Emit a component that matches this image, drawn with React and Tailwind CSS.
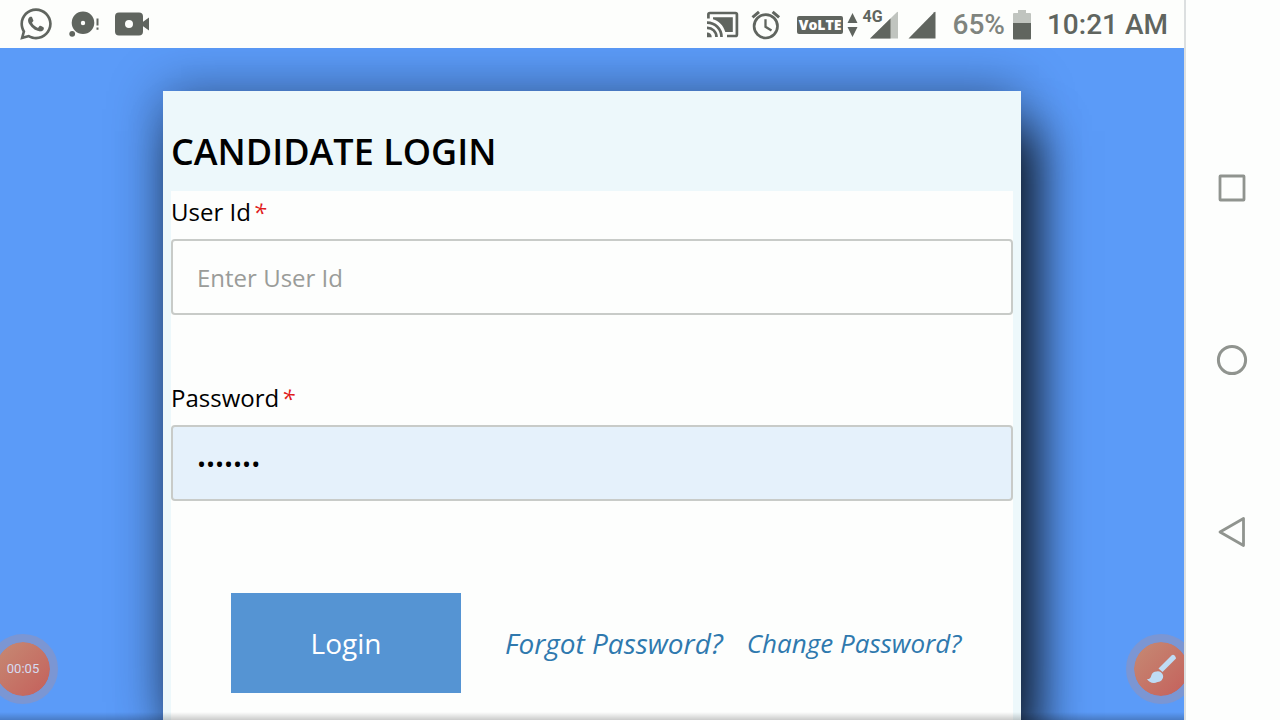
import React from 'react';
import { FaWhatsapp } from 'react-icons/fa';

const StatusBar = () => {
    return (
        <header className="flex h-12 items-center justify-between bg-[#fdfefc] pl-[18px] pr-4 font-['Roboto',sans-serif] text-[#60655f]">
            <div className="flex items-center gap-[15px]">
                <FaWhatsapp className="size-9" aria-label="WhatsApp" />
                <svg className="h-7 w-[31px]" viewBox="0 0 31 28" fill="currentColor">
                    <path fillRule="evenodd" d="M14 1.500a11.300 11.300 0 1 1 0 22.600a11.300 11.300 0 1 1 0-22.600zm0 9.300a2.200 2.200 0 1 0 0 4.400a2.200 2.200 0 1 0 0-4.400z" />
                    <circle cx="3.200" cy="23.800" r="2.900" />
                    <path d="M27.500 8.500h2v7h-2zM27.500 17.500h2v2.200h-2z" />
                </svg>
                <svg className="h-6 w-[35px]" viewBox="0 0 35 24" fill="currentColor">
                    <path fillRule="evenodd" d="M4 .5h20a4 4 0 0 1 4 4v15a4 4 0 0 1-4 4H4a4 4 0 0 1-4-4v-15a4 4 0 0 1 4-4zm10 7.500a4 4 0 1 0 0 8a4 4 0 1 0 0-8z" />
                    <path d="M27 10.500l7-5v13l-7-5z" />
                </svg>
            </div>

            <div className="flex items-center pt-[2px]">
                {/* Cast */}
                <svg className="mr-3 h-7 w-8" viewBox="0 0 32 28" fill="none" stroke="currentColor" strokeWidth="2.700">
                    <path d="M1.400 7.500V3.500q0-1.500 1.500-1.500h25.500q1.500 0 1.500 1.500v20q0 1.500-1.500 1.500H20" />
                    <path d="M6 6.300h19.800v14.800H18.300C16 14 12 9.800 6 8.200z" fill="currentColor" stroke="none" />
                    <path d="M0 11.700A14.300 14.300 0 0 1 14.500 26M0 16.800A9.200 9.200 0 0 1 9.500 26" />
                    <path d="M0 21.500A4.500 4.500 0 0 1 4.700 26.200H0z" fill="currentColor" stroke="none" />
                </svg>
                {/* Alarm */}
                <svg className="mr-4 h-[30px] w-[30px]" viewBox="0 0 30 30" fill="none" stroke="currentColor" strokeWidth="2.700">
                    <circle cx="14.800" cy="16.300" r="11.700" />
                    <path d="M14.500 9.300v7.500l6 3.700" strokeWidth="2.300" />
                    <path d="M1.500 7.300L8 1.800M21.600 1.800l6.500 5.500" strokeWidth="3" />
                </svg>
                <span className="mr-1 flex h-[18px] items-center rounded-xs bg-[#60655f] px-[2px] font-['Open_Sans',sans-serif] text-sm font-extrabold text-white">
                    VoLTE
                </span>
                <svg className="mr-1 h-6 w-[11px]" viewBox="0 0 11 24" fill="currentColor">
                    <path d="M5.500 0L10.500 10H.5zM5.500 24L.5 14h10z" />
                </svg>
                <div className="relative mr-2.5 flex w-9 justify-end">
                    <svg className="h-7 w-7" viewBox="0 0 28 28">
                        <path d="M28 1.500Q28 0 26.800 1.200L0 27.500h28z" fill="#c0c4bf" />
                        <path d="M20.500 7.400V27.500H0z" fill="#60655f" />
                    </svg>
                    <span className="absolute -top-0.5 left-0 text-base leading-none font-bold">4G</span>
                </div>
                <svg className="mr-4 h-7 w-7" viewBox="0 0 28 28" fill="currentColor">
                    <path d="M27.500 1.500Q27.500 0 26.300 1.200L.5 27.500h27z" />
                </svg>
                <span className="mr-2 text-[28px] font-medium text-[#7f847e]">65%</span>
                <svg className="mr-4 h-[30px] w-[18px]" viewBox="0 0 18 30">
                    <path d="M5 0h8v3h4a1 1 0 0 1 1 1v9H0V4a1 1 0 0 1 1-1h4z" fill="#c0c4bf" />
                    <path d="M0 13h18v15.500a1 1 0 0 1-1 1H1a1 1 0 0 1-1-1z" fill="#60655f" />
                </svg>
                <span className="text-[28px] font-medium">10:21 AM</span>
            </div>
        </header>
    );
};

const Field = ({ id, label, fieldClass, ...rest }) => {
    return (
        <div>
            <label htmlFor={id} className="flex h-12 gap-0.5 text-2xl leading-[42px]">
                {label}
                <em className="text-[#e01b1b]">*</em>
            </label>
            <input
                id={id}
                className={`h-[76px] w-full rounded border-2 border-[#c8cbc8] px-6 text-2xl outline-none placeholder:text-[#9a9c99] ${fieldClass}`}
                {...rest}
            />
        </div>
    );
};

const LoginCard = () => {
    return (
        <section className="flex flex-1 flex-col bg-[#edf8fb] px-2 shadow-[18px_40px_44px_rgba(0,0,0,0.75),0_0_50px_rgba(0,0,0,0.4)]">
            <h1 className="flex h-[100px] items-center pt-[22px] text-4xl font-semibold">CANDIDATE LOGIN</h1>
            <form className="flex flex-1 flex-col bg-[#fdfefd]" onSubmit={(e) => e.preventDefault()}>
                <div className="flex flex-col gap-[62px]">
                    <Field id="user-id" label="User Id" type="text" placeholder="Enter User Id" fieldClass="bg-[#fdfefd]" />
                    <Field id="password" label="Password" type="password" defaultValue="1234567" fieldClass="bg-[#e5f1fb]" />
                </div>
                <div className="mt-[92px] flex items-center pl-[60px] text-[#2f79ae] italic">
                    <button type="submit" className="h-[100px] w-[230px] bg-[#5594d3] text-[28px] text-white not-italic">
                        Login
                    </button>
                    <a href="#forgot" className="ml-11 text-[28px]">Forgot Password?</a>
                    <a href="#change" className="ml-6 text-[26px]">Change Password?</a>
                </div>
            </form>
        </section>
    );
};

// Floating recorder button
const Bubble = ({ className, children, ...rest }) => {
    return (
        <button
            type="button"
            className={`absolute bottom-4 flex size-[70px] items-center justify-center rounded-full border-8 border-[#7b96d3] bg-linear-to-br from-[#c58a74] to-[#c45f5b] bg-clip-padding ${className}`}
            {...rest}
        >
            {children}
        </button>
    );
};

const NavBar = () => {
    return (
        <nav className="flex w-24 flex-col items-center justify-center gap-[140px] border-l-2 border-[#dcdfe0] bg-[#fdfefd] pr-[2px] text-[#90948f]">
            <button type="button" aria-label="Recent apps">
                <svg className="size-8" viewBox="0 0 32 32" fill="none" stroke="currentColor" strokeWidth="2.800">
                    <rect x="4" y="4" width="24" height="24" rx="0.500" />
                </svg>
            </button>
            <button type="button" aria-label="Home">
                <svg className="size-8" viewBox="0 0 32 32" fill="none" stroke="currentColor" strokeWidth="3">
                    <circle cx="16" cy="16" r="13.600" />
                </svg>
            </button>
            <button type="button" aria-label="Back">
                <svg className="size-8" viewBox="0 0 32 32" fill="none" stroke="currentColor" strokeWidth="2.800" strokeLinejoin="round">
                    <path d="M27.500 2.500v27L4 16z" />
                </svg>
            </button>
        </nav>
    );
};

const App = () => {
    return (
        <div className="flex min-h-screen bg-[#fdfefd]">
            <div className="flex flex-1 flex-col">
                <StatusBar />
                <main className="relative flex flex-1 flex-col overflow-hidden bg-[#5b9bf8] px-[163px] pt-[43px] font-['Open_Sans',sans-serif] text-black">
                    <LoginCard />
                    <div className="pointer-events-none absolute inset-x-0 bottom-0 h-2 bg-linear-to-t from-black/20 to-transparent" />
                    <Bubble className="-left-3">
                        <span className="font-['Roboto',sans-serif] text-[13px] text-[#d5dcf2]">00:05</span>
                    </Bubble>
                    <Bubble className="-right-3" aria-label="Draw">
                        <svg className="size-8" viewBox="0 0 32 32" fill="#bfdcf5">
                            <path d="M13.500 15.500L26.500 2.500q1.500-1.500 3 0t1.500 3L17.500 19z" />
                            <path d="M11.500 18.500a5.300 5.300 0 1 1 1 10.400C8.500 31.500 3.500 29 2 26c2 .5 3.500-.5 4.300-3.500c.7-2.500 2.700-4 5.200-4z" />
                        </svg>
                    </Bubble>
                </main>
            </div>
            <NavBar />
        </div>
    );
};

export default App;
